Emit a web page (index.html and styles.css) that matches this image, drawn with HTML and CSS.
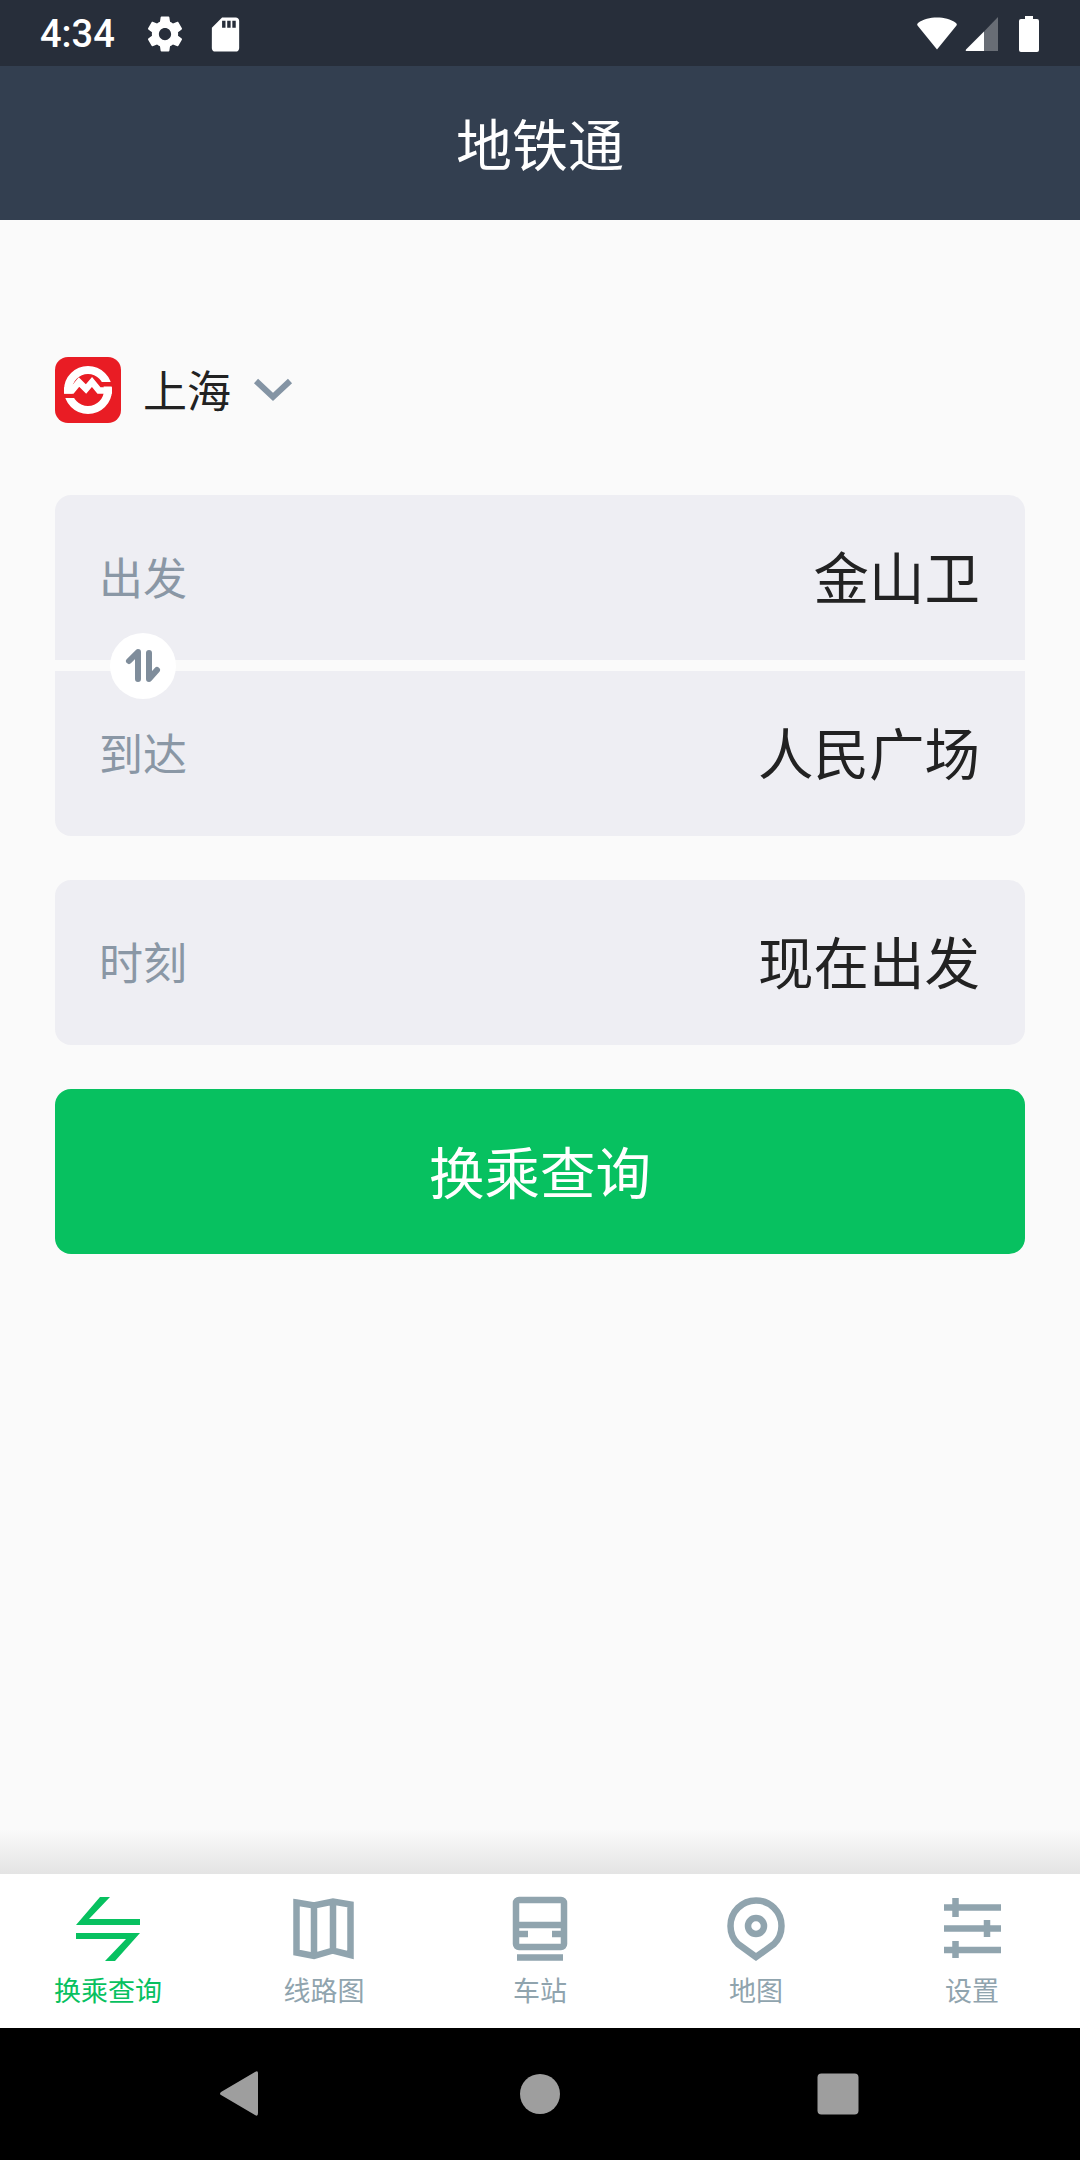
FILE: index.html
```html
<!DOCTYPE html>
<html lang="zh-CN">
<head>
  <meta charset="UTF-8">
  <title>地铁通</title>
  <link rel="stylesheet" href="styles.css">
</head>
<body>
  <div class="phone">
    <div class="status-bar">
      <span class="clock">4:34</span>
      <svg class="icon-gear" viewBox="0 0 24 24"><path d="M19.43 12.98c.04-.32.07-.64.07-.98s-.03-.66-.07-.98l2.11-1.65c.19-.15.24-.42.12-.64l-2-3.46c-.12-.22-.39-.3-.61-.22l-2.49 1c-.52-.4-1.08-.73-1.69-.98l-.38-2.65C14.46 2.18 14.25 2 14 2h-4c-.25 0-.46.18-.49.42l-.38 2.65c-.61.25-1.17.59-1.69.98l-2.49-1c-.23-.09-.49 0-.61.22l-2 3.46c-.13.22-.07.49.12.64l2.11 1.65c-.04.32-.07.65-.07.98s.03.66.07.98l-2.11 1.65c-.19.15-.24.42-.12.64l2 3.46c.12.22.39.3.61.22l2.49-1c.52.4 1.08.73 1.69.98l.38 2.65c.03.24.24.42.49.42h4c.25 0 .46-.18.49-.42l.38-2.65c.61-.25 1.17-.59 1.69-.98l2.49 1c.23.09.49 0 .61-.22l2-3.46c.12-.22.07-.49-.12-.64l-2.11-1.65zM12 15.5c-1.93 0-3.5-1.57-3.5-3.5s1.57-3.5 3.5-3.5 3.5 1.57 3.5 3.5-1.57 3.5-3.5 3.5z"/></svg>
      <svg class="icon-sd" viewBox="0 0 24 24"><path d="M18 2h-8L4.02 8 4 20c0 1.1.9 2 2 2h12c1.1 0 2-.9 2-2V4c0-1.1-.9-2-2-2zm-6 6h-2V4h2v4zm3 0h-2V4h2v4zm3 0h-2V4h2v4z"/></svg>
      <div class="status-right">
        <svg class="icon-wifi" viewBox="0 0 42 33"><path d="M21 32.5 1.5 8.5Q.5 7 2 6C7.5 2 14 .5 21 .5S34.500 2 40 6Q41.500 7 40.500 8.500Z"/></svg>
        <svg class="icon-signal" viewBox="0 0 33 34"><path class="dim" d="M19 34V14.500L33 0V34Z"/><path d="M19 34H2Q0 34 1 32.500L19 14.500Z"/></svg>
        <svg class="icon-battery" viewBox="0 0 20 36"><path d="M6 0H14V3H18Q20 3 20 5V34Q20 36 18 36H2Q0 36 0 34V5Q0 3 2 3H6Z"/></svg>
      </div>
    </div>

    <header class="title-bar"><span>地铁通</span></header>

    <main class="content">
      <div class="city">
        <svg class="city-logo" viewBox="0 0 66 66">
          <rect width="66" height="66" rx="13" fill="#e91c24"/>
          <circle cx="33" cy="33" r="20" fill="none" stroke="#fff" stroke-width="8"/>
          <path d="M44 25H58V29.500H44ZM8 36.500H22V41H8Z" fill="#e91c24"/>
          <path d="M9 33.500H17L24 25 31 32 37 25 44 33.500H57" fill="none" stroke="#fff" stroke-width="6.500"/>
        </svg>
        <span class="city-name">上海</span>
        <svg class="city-arrow" viewBox="0 0 40 26"><path d="M3 4 20 20 37 4"/></svg>
      </div>

      <div class="route">
        <div class="field"><span class="field-label">出发</span><span class="field-value">金山卫</span></div>
        <div class="field"><span class="field-label">到达</span><span class="field-value">人民广场</span></div>
        <div class="swap">
          <svg viewBox="0 0 40 40"><path d="M15 33V6L6 15M26 7V33L34 24"/></svg>
        </div>
      </div>

      <div class="field field-single"><span class="field-label">时刻</span><span class="field-value">现在出发</span></div>

      <div class="search-btn"><span>换乘查询</span></div>
    </main>

    <nav class="tabs">
      <div class="tab tab-active">
        <svg viewBox="0 0 72 72"><path class="solid" d="M28 4H38L17 26H68V32H4ZM4 40H68L43 68H33L54 46H4Z"/></svg>
        <span>换乘查询</span>
      </div>
      <div class="tab">
        <svg viewBox="0 0 72 72"><path d="M8.500 9.500 26 12.500 45 8.500 62.500 11.500V62L45 57.500 26 63 8.500 59.500ZM26 12.500V63M45 8.500V57.500"/></svg>
        <span>线路图</span>
      </div>
      <div class="tab">
        <svg viewBox="0 0 72 72"><rect x="12" y="7" width="48" height="47" rx="3"/><path d="M11 32H61M11 41H24M48 41H61M13 64.500H59"/></svg>
        <span>车站</span>
      </div>
      <div class="tab">
        <svg viewBox="0 0 72 72"><path d="M36 64 18 51A25.500 25.500 0 1 1 54 51Z"/><circle cx="36" cy="33" r="8"/></svg>
        <span>地图</span>
      </div>
      <div class="tab">
        <svg viewBox="0 0 72 72"><path d="M8 14.500H65M8 35.500H65M8 57H65M19.500 5V24M51 27V44M19.500 48V65"/></svg>
        <span>设置</span>
      </div>
    </nav>

    <div class="nav-bar">
      <svg class="nav-back" viewBox="0 0 48 48"><path d="M42 3V43Q42 47 39 45L5 25Q3 24 5 22L39 2Q42 0 42 3Z"/></svg>
      <svg viewBox="0 0 48 48"><circle cx="24" cy="24" r="20"/></svg>
      <svg viewBox="0 0 48 48"><rect x="3.500" y="3.500" width="41" height="41" rx="4"/></svg>
    </div>
  </div>
</body>
</html>
```

FILE: styles.css
```css
/* Base styling */
* {
  box-sizing: border-box;
}

body {
  margin: 0;
  font-family: "Noto Sans CJK SC", "Noto Sans", sans-serif;
  background: #fafafa;
}

.phone {
  width: 1080px;
  height: 2160px;
  display: flex;
  flex-direction: column;
  overflow: hidden;
}

/* Android status bar */
.status-bar {
  height: 66px;
  flex: none;
  display: flex;
  align-items: center;
  padding: 2px 41px 0 40px;
  background: #272e3a;
  fill: #fff;
}

.clock {
  width: 74px;
  font-family: Roboto, sans-serif;
  font-weight: 500;
  font-size: 38px;
  line-height: 1;
  color: #fff;
}

.icon-gear {
  width: 42px;
  height: 42px;
  margin-left: 30px;
}

.icon-sd {
  width: 41px;
  height: 41px;
  margin-left: 19px;
}

.status-right {
  margin-left: auto;
  display: flex;
  align-items: center;
}

.icon-wifi {
  width: 42px;
  height: 33px;
  margin-bottom: 2px;
}

.icon-signal {
  width: 33px;
  height: 34px;
  margin-left: 7px;
}

.icon-signal .dim {
  opacity: 0.3;
}

.icon-battery {
  width: 20px;
  height: 36px;
  margin-left: 21px;
}

/* Title bar */
.title-bar {
  height: 154px;
  flex: none;
  display: flex;
  align-items: center;
  justify-content: center;
  padding-bottom: 4px;
  background: #333f50;
  color: #fff;
  font-size: 56px;
}

/* Main content */
.content {
  flex: 1;
  padding: 137px 55px 0;
}

.city {
  display: flex;
  align-items: center;
  height: 66px;
  margin-bottom: 72px;
}

.city-logo {
  width: 66px;
  height: 66px;
}

.city-name {
  margin-left: 22px;
  padding-bottom: 2px;
  font-size: 44px;
  color: #222;
}

.city-arrow {
  width: 40px;
  height: 26px;
  margin-left: 22px;
  fill: none;
  stroke: #8494a4;
  stroke-width: 6;
}

.route {
  position: relative;
  display: flex;
  flex-direction: column;
  gap: 11px;
}

.field {
  height: 165px;
  display: flex;
  align-items: center;
  justify-content: space-between;
  padding: 0 45px 4px 44px;
  background: #eeeef3;
}

.route .field:first-child {
  border-radius: 16px 16px 0 0;
}

.route .field:nth-child(2) {
  border-radius: 0 0 16px 16px;
}

.field-single {
  margin-top: 44px;
  border-radius: 16px;
}

.field-label {
  font-size: 44px;
  color: #8a97a5;
}

.field-value {
  padding-bottom: 2px;
  font-size: 55.500px;
  color: #222;
}

/* Round swap button sits over the gap between the two fields */
.swap {
  position: absolute;
  left: 55px;
  top: 138px;
  width: 66px;
  height: 66px;
  display: flex;
  align-items: center;
  justify-content: center;
  border-radius: 50%;
  background: #fff;
}

.swap svg {
  width: 40px;
  height: 40px;
  fill: none;
  stroke: #7f8d9b;
  stroke-width: 6;
  stroke-linecap: round;
  stroke-linejoin: round;
}

.search-btn {
  height: 165px;
  margin-top: 44px;
  display: flex;
  align-items: center;
  justify-content: center;
  padding-bottom: 4px;
  border-radius: 16px;
  background: #07c160;
  color: #fff;
  font-size: 55.500px;
}

/* Bottom tabs */
.tabs {
  position: relative;
  height: 154px;
  flex: none;
  display: grid;
  grid-template-columns: repeat(5, 1fr);
  background: #fff;
}

.tabs::before {
  content: "";
  position: absolute;
  left: 0;
  right: 0;
  bottom: 100%;
  height: 44px;
  background: linear-gradient(rgba(228, 228, 228, 0), #e4e4e4);
}

.tab {
  display: flex;
  flex-direction: column;
  align-items: center;
  padding-top: 19px;
  color: #90a4ae;
  font-size: 27px;
  line-height: 36px;
}

.tab svg {
  width: 72px;
  height: 72px;
  margin-bottom: 7px;
  fill: none;
  stroke: #90a4ae;
  stroke-width: 6.500;
}

.tab-active {
  color: #07c160;
}

.tab-active .solid {
  fill: #07c160;
  stroke: none;
}

/* Android navigation bar */
.nav-bar {
  height: 132px;
  flex: none;
  display: flex;
  align-items: center;
  justify-content: center;
  gap: 250px;
  background: #000;
  fill: #9e9e9e;
}

.nav-bar svg {
  width: 48px;
  height: 48px;
}

.nav-back {
  margin-left: -2px;
  margin-right: 2px;
}
```
